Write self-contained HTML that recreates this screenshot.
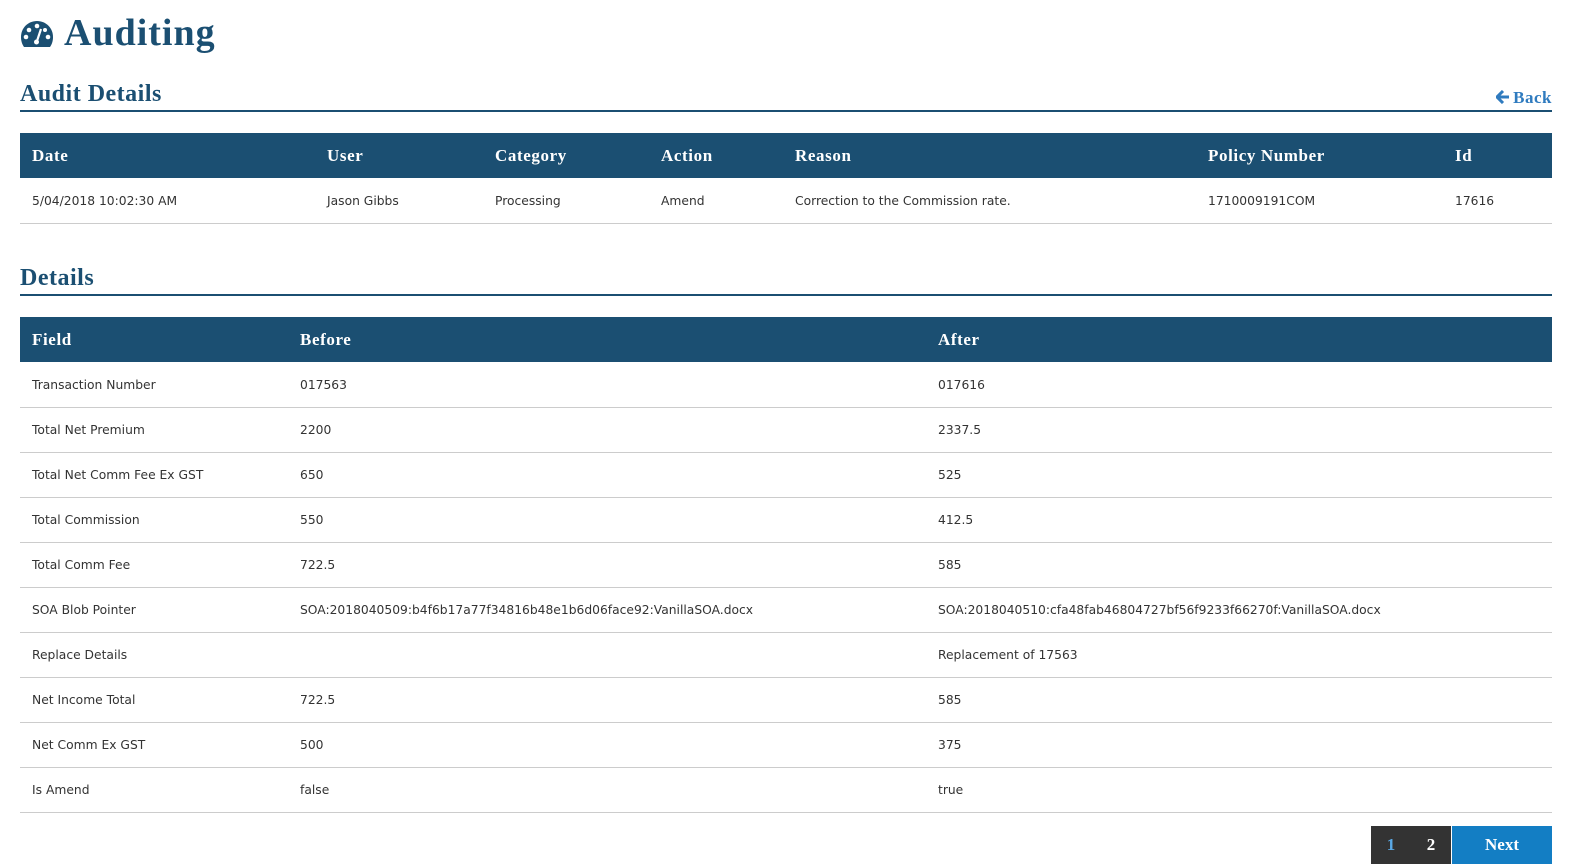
<!DOCTYPE html>
<html><head><meta charset="utf-8"><style>
body{margin:0;background:#fff;font-family:"DejaVu Sans","Liberation Sans",sans-serif;color:#333;}
.wrap{position:absolute;left:20px;width:1532px;top:0}
h1{position:absolute;top:11px;left:0;margin:0;font:bold 38px "Liberation Serif",serif;color:#1b4f72;letter-spacing:1px}
h1 svg{vertical-align:-3px;margin-right:10px}
h2{position:absolute;left:0;margin:0;font:bold 24px "Liberation Serif",serif;color:#1b4f72;width:1532px;border-bottom:2px solid #1b4f72;height:31px;line-height:30px;letter-spacing:0.5px}
.back{position:absolute;right:0;top:88px;font:bold 17px "Liberation Serif",serif;color:#2f7bbf;letter-spacing:0.5px}
.back svg{vertical-align:-1px;margin-right:3px}
table{position:absolute;left:0;width:1532px;border-collapse:collapse;table-layout:fixed}
th{background:#1b4f72;color:#fff;font:bold 17px "Liberation Serif",serif;letter-spacing:0.6px;text-align:left;height:45px;padding:0 0 0 12px}
td{font-size:12.3px;height:44px;padding:0 0 0 12px;border-bottom:1px solid #ccc;white-space:nowrap}
.pg{position:absolute;top:826px;left:1371px;height:38px;display:flex;font:bold 17px "Liberation Serif",serif}
.pg div{display:flex;align-items:center;justify-content:center}
</style></head><body>
<div class="wrap">
<h1><svg width="34" height="28" viewBox="0 0 34 28"><path d="M17 1C8 1 1 8 1 17c0 4 1 7 3 10h26c2-3 3-6 3-10C33 8 26 1 17 1z" fill="#1b4f72"/><circle cx="17" cy="6" r="2.3" fill="#fff"/><circle cx="9" cy="10" r="2.3" fill="#fff"/><circle cx="6" cy="17" r="2.3" fill="#fff"/><circle cx="28" cy="17" r="2.3" fill="#fff"/><circle cx="25" cy="10" r="2" fill="#fff"/><path d="M21 9l-4 12" stroke="#fff" stroke-width="2.2"/><circle cx="16.5" cy="22" r="2.5" fill="#fff"/></svg>Auditing</h1>
<h2 style="top:79px">Audit Details</h2>
<div class="back"><svg width="14" height="14" viewBox="0 0 14 14"><path d="M7 1L1 7l6 6M1 7h12" stroke="#2f7bbf" stroke-width="3" fill="none"/></svg>Back</div>
<table style="top:133px">
<colgroup><col style="width:295px"><col style="width:168px"><col style="width:166px"><col style="width:134px"><col style="width:413px"><col style="width:247px"><col></colgroup>
<tr><th>Date</th><th>User</th><th>Category</th><th>Action</th><th>Reason</th><th>Policy Number</th><th>Id</th></tr>
<tr><td style="height:45px">5/04/2018 10:02:30 AM</td><td>Jason Gibbs</td><td>Processing</td><td>Amend</td><td>Correction to the Commission rate.</td><td>1710009191COM</td><td>17616</td></tr>
</table>
<h2 style="top:263px">Details</h2>
<table style="top:317px">
<colgroup><col style="width:268px"><col style="width:638px"><col></colgroup>
<tr><th>Field</th><th>Before</th><th>After</th></tr>
<tr><td style="height:45px">Transaction Number</td><td>017563</td><td>017616</td></tr>
<tr><td>Total Net Premium</td><td>2200</td><td>2337.5</td></tr>
<tr><td>Total Net Comm Fee Ex GST</td><td>650</td><td>525</td></tr>
<tr><td>Total Commission</td><td>550</td><td>412.5</td></tr>
<tr><td>Total Comm Fee</td><td>722.5</td><td>585</td></tr>
<tr><td>SOA Blob Pointer</td><td>SOA:2018040509:b4f6b17a77f34816b48e1b6d06face92:VanillaSOA.docx</td><td>SOA:2018040510:cfa48fab46804727bf56f9233f66270f:VanillaSOA.docx</td></tr>
<tr><td>Replace Details</td><td></td><td>Replacement of 17563</td></tr>
<tr><td>Net Income Total</td><td>722.5</td><td>585</td></tr>
<tr><td>Net Comm Ex GST</td><td>500</td><td>375</td></tr>
<tr><td>Is Amend</td><td>false</td><td>true</td></tr>
</table>
</div>
<div class="pg"><div style="width:40px;background:#333;color:#5aa9e6">1</div><div style="width:40px;background:#333;color:#fff">2</div><div style="width:100px;background:#137ec4;color:#fff;margin-left:1px">Next</div></div>
</body></html>
